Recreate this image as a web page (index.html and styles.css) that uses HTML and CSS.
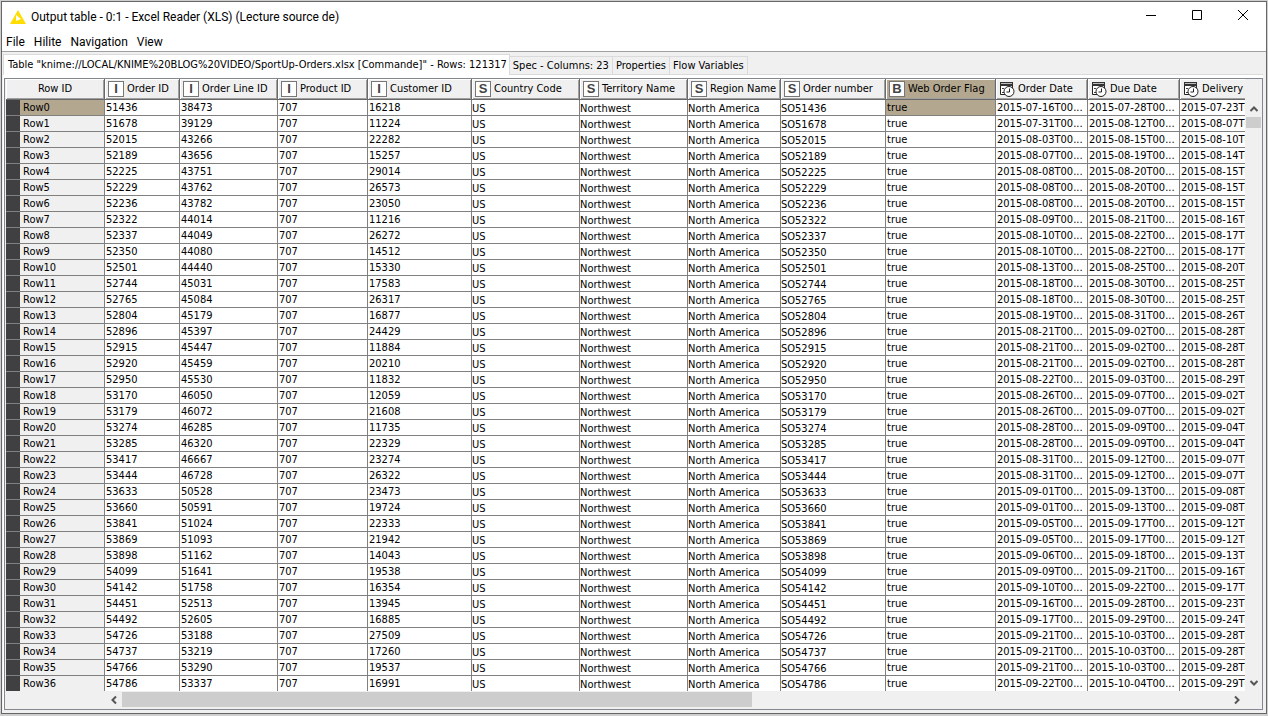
FILE: index.html
```html
<!DOCTYPE html>
<html lang="en">
<head>
<meta charset="utf-8">
<title>Output table - 0:1 - Excel Reader (XLS)</title>
<link rel="stylesheet" href="styles.css">
</head>
<body>
<svg class="defs" aria-hidden="true">
  <symbol id="type-date" viewBox="0 0 16 16">
    <path d="M1.500 1.500h12v12h-12z" fill="#fff" stroke="#222"/>
    <path d="M1 1h13v4H1z" fill="#333"/>
    <path d="M2 2.500h11" stroke="#bbb"/>
    <path d="M3 7.500h2M3 11.500h2" stroke="#444"/>
    <circle cx="10" cy="10.500" r="5" fill="#fff" stroke="#222"/>
    <path d="M10.500 7.500v3.500h-3" fill="none" stroke="#222"/>
  </symbol>
</svg>
<div class="window">
  <header class="titlebar">
    <svg class="logo" viewBox="0 0 16 14"><path d="M8 0L16 14H0z" fill="#fd0"/><path d="M6 5l5 4-5 2z" fill="#fff"/></svg>
    <h1 class="title">Output table - 0:1 - Excel Reader (XLS) (Lecture source de)</h1>
    <div class="controls">
      <button aria-label="Minimize"><svg viewBox="0 0 12 12"><path d="M1 6.500h10" stroke="#000"/></svg></button>
      <button aria-label="Maximize"><svg viewBox="0 0 12 12"><path d="M1.500 1.500h9v9h-9z" fill="none" stroke="#000"/></svg></button>
      <button aria-label="Close"><svg viewBox="0 0 12 12"><path d="M1 1l10 10M11 1L1 11" stroke="#000"/></svg></button>
    </div>
  </header>
  <nav class="menubar"><button>File</button><button>Hilite</button><button>Navigation</button><button>View</button></nav>
  <main class="content">
    <div class="tabs" role="tablist">
      <button class="tab selected" role="tab" aria-selected="true">Table "knime://LOCAL/KNIME%20BLOG%20VIDEO/SportUp-Orders.xlsx [Commande]" - Rows: 121317</button>
      <button class="tab" role="tab">Spec - Columns: 23</button>
      <button class="tab" role="tab">Properties</button>
      <button class="tab" role="tab">Flow Variables</button>
    </div>
    <div class="panel">
      <div class="pane">
        <div class="viewport">
          <table class="grid">
            <colgroup><col class="c-mark"><col class="c-id"><col class="c-order"><col class="c-line"><col class="c-product"><col class="c-customer"><col class="c-text"><col class="c-text"><col class="c-region"><col class="c-number"><col class="c-flag"><col class="c-date"><col class="c-date"><col class="c-date"></colgroup>
            <thead><tr id="head"></tr></thead>
            <tbody id="rows"></tbody>
          </table>
        </div>
        <div class="vscroll">
          <button aria-label="Scroll up"><svg viewBox="0 0 10 10"><path d="M1.500 7L5 3.500 8.500 7"/></svg></button>
          <div class="track"><div class="vthumb"></div></div>
          <button aria-label="Scroll down"><svg viewBox="0 0 10 10"><path d="M1.500 3L5 6.500 8.500 3"/></svg></button>
        </div>
        <div class="hscroll">
          <button aria-label="Scroll left"><svg viewBox="0 0 10 10"><path d="M7 1.500L3.500 5 7 8.500"/></svg></button>
          <div class="track"><div class="hthumb"></div></div>
          <button aria-label="Scroll right"><svg viewBox="0 0 10 10"><path d="M3 1.500L6.500 5 3 8.500"/></svg></button>
        </div>
      </div>
    </div>
  </main>
</div>
<script src="table.js"></script>
</body>
</html>
```
FILE: styles.css
```css
* { box-sizing: border-box; }
body {
  margin: 0;
  height: 100vh;
  padding: 1px 1px 2px;
  background: #cfcfcf;
  font: 11px/15px "DejaVu Sans Condensed", "Noto Sans", sans-serif;
  color: #000;
}
button { border: 0; padding: 0; background: none; font: inherit; color: inherit; }
.defs { position: absolute; width: 0; height: 0; }
.window {
  display: flex;
  flex-direction: column;
  height: 100%;
  border: 1px solid #666;
  background: #fff;
}
.titlebar { display: flex; align-items: center; height: 30px; padding-left: 8px; }
.logo { width: 16px; height: 14px; }
.title { flex: 1; margin: 0 0 0 5px; font: 12px/16px Roboto, "Noto Sans", sans-serif; }
.controls { display: flex; }
.controls button { width: 46px; height: 28px; }
.controls svg { width: 12px; height: 12px; }
.menubar {
  display: flex;
  gap: 9px;
  height: 20px;
  padding-left: 4px;
  border-bottom: 1px solid #a0a0a0;
  font: 12px/18px Roboto, "Noto Sans", sans-serif;
}
.content { flex: 1; min-height: 0; display: flex; flex-direction: column; padding: 2px 3px 3px 1px; background: #f0f0f0; }
.tabs { display: flex; align-items: flex-end; height: 21px; border-bottom: 1px solid #dadada; }
.tab { height: 18px; padding: 0 3px; border: 1px solid #dadada; border-width: 1px 1px 0 0; white-space: nowrap; }
.tab.selected { height: 21px; background: #fff; margin-bottom: -1px; padding: 0 2px 2px 4px; border-left-width: 1px; }
.panel { flex: 1; min-height: 0; display: flex; padding: 3px 0 0 1px; background: #fff; }
.pane {
  flex: 1;
  min-width: 0;
  display: grid;
  grid-template-columns: minmax(0, 1fr) 17px;
  grid-template-rows: minmax(0, 1fr) 18px;
  padding-left: 1px;
  border: 1px solid #828790;
  background: #f0f0f0;
}
.viewport { overflow: hidden; }
.grid { table-layout: fixed; width: 1266px; border-collapse: separate; border-spacing: 0; }
.c-mark { width: 14px; } .c-id { width: 85px; } .c-order { width: 75px; } .c-line { width: 98px; }
.c-product { width: 90px; } .c-customer { width: 104px; } .c-text { width: 108px; }
.c-region { width: 93px; } .c-number { width: 105px; } .c-flag { width: 110px; } .c-date { width: 92px; }
th, td { padding: 0; font-weight: normal; white-space: nowrap; overflow: hidden; text-align: left; }
th { height: 21px; background: #f0f0f0; border: 1px solid #696969; border-width: 0 1px 1px 0; box-shadow: inset 1px 1px #fff, inset -1px -1px #a0a0a0; }
.th-in { display: flex; align-items: center; gap: 3px; height: 20px; padding-left: 3px; }
.th-in.plain { justify-content: center; padding: 0 0 2px; }
.label { padding-bottom: 2px; }
.type { flex: none; width: 16px; height: 16px; border: 1px solid #777; background: #fff; font: bold 13px/14px "Liberation Sans", sans-serif; text-align: center; color: #444; }
.date-icon { flex: none; width: 16px; height: 16px; }
td { height: 16px; line-height: 15px; padding-left: 1px; background: #fff; border: 1px solid #808080; border-width: 0 1px 1px 0; }
td.mark { background: #404040; border-right: 0; }
td.id { background: #f0f0f0; padding-left: 3px; }
td.text { padding: 2px 0 0; line-height: 13px; }
th.active, td.active { background: #b3a78f; }
.vscroll { display: flex; flex-direction: column; padding-top: 21px; }
.vscroll button { height: 17px; }
.vthumb { height: 11px; margin: 0 1px; background: #cdcdcd; }
.track { flex: 1; }
.hscroll { display: flex; padding: 1px 0 2px 99px; }
.hscroll button { width: 17px; }
.hthumb { width: 57%; height: 100%; background: #cdcdcd; }
.vscroll button, .hscroll button { display: flex; align-items: center; justify-content: center; }
.vscroll svg, .hscroll svg { width: 10px; height: 10px; fill: none; stroke: #555; stroke-width: 2; }
```
FILE: table.js
```js
const columns = [
  ["I", "Order ID"], ["I", "Order Line ID"], ["I", "Product ID"], ["I", "Customer ID"],
  ["S", "Country Code"], ["S", "Territory Name"], ["S", "Region Name"], ["S", "Order number"],
  ["B", "Web Order Flag"], ["D", "Order Date"], ["D", "Due Date"], ["D", "Delivery Date"]
];
// order, line, customer, order date, due date, delivery date
const data = `51436 38473 16218 07-16 07-28 07-23
51678 39129 11224 07-31 08-12 08-07
52015 43266 22282 08-03 08-15 08-10
52189 43656 15257 08-07 08-19 08-14
52225 43751 29014 08-08 08-20 08-15
52229 43762 26573 08-08 08-20 08-15
52236 43782 23050 08-08 08-20 08-15
52322 44014 11216 08-09 08-21 08-16
52337 44049 26272 08-10 08-22 08-17
52350 44080 14512 08-10 08-22 08-17
52501 44440 15330 08-13 08-25 08-20
52744 45031 17583 08-18 08-30 08-25
52765 45084 26317 08-18 08-30 08-25
52804 45179 16877 08-19 08-31 08-26
52896 45397 24429 08-21 09-02 08-28
52915 45447 11884 08-21 09-02 08-28
52920 45459 20210 08-21 09-02 08-28
52950 45530 11832 08-22 09-03 08-29
53170 46050 12059 08-26 09-07 09-02
53179 46072 21608 08-26 09-07 09-02
53274 46285 11735 08-28 09-09 09-04
53285 46320 22329 08-28 09-09 09-04
53417 46667 23274 08-31 09-12 09-07
53444 46728 26322 08-31 09-12 09-07
53633 50528 23473 09-01 09-13 09-08
53660 50591 19724 09-01 09-13 09-08
53841 51024 22333 09-05 09-17 09-12
53869 51093 21942 09-05 09-17 09-12
53898 51162 14043 09-06 09-18 09-13
54099 51641 19538 09-09 09-21 09-16
54142 51758 16354 09-10 09-22 09-17
54451 52513 13945 09-16 09-28 09-23
54492 52605 16885 09-17 09-29 09-24
54726 53188 27509 09-21 10-03 09-28
54737 53219 17260 09-21 10-03 09-28
54766 53290 19537 09-21 10-03 09-28
54786 53337 16991 09-22 10-04 09-29`.split("\n").map(r => r.split(" "));

document.getElementById("head").innerHTML =
  '<th colspan="2" scope="col"><div class="th-in plain">Row ID</div></th>' +
  columns.map(([type, name]) => {
    const icon = type === "D"
      ? '<svg class="date-icon" aria-hidden="true"><use href="#type-date"/></svg>'
      : `<span class="type">${type}</span>`;
    return `<th scope="col" class="${type === "B" ? "active" : ""}"><div class="th-in">${icon}<span class="label">${name}</span></div></th>`;
  }).join("");

document.getElementById("rows").innerHTML = data.map(([order, line, customer, ...dates], i) => {
  const active = i === 0 ? " active" : "";
  return `<tr><td class="mark"></td><td class="id${active}">Row${i}</td>` +
    [order, line, 707, customer].map(v => `<td>${v}</td>`).join("") +
    ["US", "Northwest", "North America", "SO" + order].map(v => `<td class="text">${v}</td>`).join("") +
    `<td class="${active}">true</td>` +
    dates.map(d => `<td>2015-${d}T00...</td>`).join("") + "</tr>";
}).join("");
```
